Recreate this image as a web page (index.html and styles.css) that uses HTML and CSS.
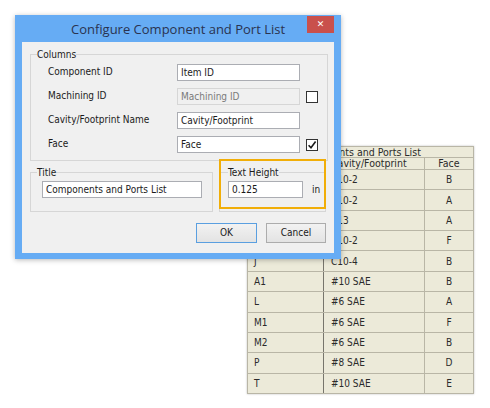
FILE: index.html
```html
<!DOCTYPE html>
<html>
<head>
<meta charset="utf-8">
<link rel="stylesheet" href="styles.css">
</head>
<body>
<div class="page">
  <table class="ports">
    <tr class="cap"><td colspan="3">Components and Ports List</td></tr>
    <tr class="head"><td class="c1"></td><td class="c2">Cavity/Footprint</td><td class="c3">Face</td></tr>
    <tr><td class="c1"></td><td class="c2">C10-2</td><td class="c3">B</td></tr>
    <tr><td class="c1"></td><td class="c2">C10-2</td><td class="c3">A</td></tr>
    <tr><td class="c1"></td><td class="c2">C13</td><td class="c3">A</td></tr>
    <tr><td class="c1"></td><td class="c2">C10-2</td><td class="c3">F</td></tr>
    <tr><td class="c1">J</td><td class="c2">C10-4</td><td class="c3">B</td></tr>
    <tr><td class="c1">A1</td><td class="c2">#10 SAE</td><td class="c3">B</td></tr>
    <tr><td class="c1">L</td><td class="c2">#6 SAE</td><td class="c3">A</td></tr>
    <tr><td class="c1">M1</td><td class="c2">#6 SAE</td><td class="c3">F</td></tr>
    <tr><td class="c1">M2</td><td class="c2">#6 SAE</td><td class="c3">B</td></tr>
    <tr><td class="c1">P</td><td class="c2">#8 SAE</td><td class="c3">D</td></tr>
    <tr><td class="c1">T</td><td class="c2">#10 SAE</td><td class="c3">E</td></tr>
  </table>

  <div class="dialog">
    <div class="titlebar">
      <span></span>
      <span class="title">Configure Component and Port List</span>
      <span class="close">&#x2715;</span>
    </div>
    <div class="content">
      <fieldset class="group columns">
        <legend>Columns</legend>
        <div class="grid">
          <span class="lbl">Component ID</span>
          <span class="input">Item ID</span>
          <span></span>
          <span class="lbl">Machining ID</span>
          <span class="input disabled">Machining ID</span>
          <span class="check"></span>
          <span class="lbl">Cavity/Footprint Name</span>
          <span class="input">Cavity/Footprint</span>
          <span></span>
          <span class="lbl">Face</span>
          <span class="input">Face</span>
          <span class="check checked"><svg viewBox="0 0 10 10" width="10" height="10"><path d="M1.6 5.2 L4 7.8 L8.6 1.6" fill="none" stroke="#1a1a1a" stroke-width="1.6"/></svg></span>
        </div>
      </fieldset>
      <div class="bottom">
        <fieldset class="group titlebox">
          <legend>Title</legend>
          <span class="input wide">Components and Ports List</span>
        </fieldset>
        <fieldset class="group heightbox">
          <legend>Text Height</legend>
          <div class="hrow">
            <span class="input short">0.125</span>
            <span class="unit">in</span>
          </div>
        </fieldset>
      </div>
      <div class="buttons">
        <span class="btn default">OK</span>
        <span class="btn">Cancel</span>
      </div>
      <div class="highlight"></div>
    </div>
  </div>
</div>
</body>
</html>
```

FILE: styles.css
```css
html, body {
  margin: 0;
  padding: 0;
  background: #ffffff;
}
.page {
  position: relative;
  width: 490px;
  height: 408px;
  overflow: hidden;
  padding: 146px 0 0 247px;
  box-sizing: border-box;
}

/* background table */
.ports {
  border-collapse: collapse;
  width: 227px;
  background: #ecead9;
  font-family: "DejaVu Sans Condensed", "DejaVu Sans", sans-serif;
  font-size: 10px;
  color: #2b2b2b;
  box-shadow: 0 0 2px rgba(0,0,0,0.25);
}
.ports td {
  padding: 0;
  border: 1px solid #b9b6a6;
  line-height: 11px;
  white-space: nowrap;
}
.ports tr { height: 20.36px; }
.ports tr.cap { height: 10px; }
.ports tr.head { height: 12px; }
.ports tr.cap td {
  text-align: center;
  font-size: 10.5px;
  line-height: 10px;
  padding-right: 6px;
}
.ports tr.head td { line-height: 11px; font-size: 10.5px; }
.ports .c1 { width: 69px; padding-left: 6px; border-right-color: #77756c; }
.ports .c2 { width: 93px; padding-left: 7px; }
.ports .c3 { text-align: center; }

/* dialog */
.dialog {
  position: absolute;
  left: 15px;
  top: 15px;
  width: 326px;
  height: 244px;
  background: #66acf4;
  box-shadow: 0 1px 5px rgba(0,0,0,0.28);
  display: flex;
  flex-direction: column;
  padding: 0 7px 6px 7px;
  box-sizing: border-box;
}
.titlebar {
  height: 27px;
  display: grid;
  grid-template-columns: 1fr auto 1fr;
  align-items: start;
  margin: 0 -7px;
}
.title {
  font-family: "Open Sans", "Noto Sans", sans-serif;
  font-size: 13px;
  color: #2a3350;
  line-height: 16px;
  margin-top: 6px;
  white-space: nowrap;
}
.close {
  justify-self: end;
  margin-right: 7px;
  margin-top: 1px;
  width: 27px;
  height: 17px;
  background: #c9504c;
  color: #ffffff;
  font-family: "DejaVu Sans", sans-serif;
  font-size: 9px;
  font-weight: bold;
  line-height: 17px;
  text-align: center;
}
.content {
  position: relative;
  flex: 1;
  background: #f0f0f0;
  padding: 6px 6px 0 8px;
  display: flex;
  flex-direction: column;
  font-family: "DejaVu Sans Condensed", "DejaVu Sans", sans-serif;
  font-size: 10px;
  color: #1b1b1b;
}
.group {
  margin: 0;
  border: 1px solid #d6d6d6;
  padding: 0;
  min-width: 0;
}
.group legend {
  padding: 0;
  line-height: 13px;
  margin-left: 6px;
}
.columns { padding: 0 0 7px 0; }
.grid {
  display: grid;
  grid-template-columns: 129px 123px 12px;
  column-gap: 0;
  row-gap: 7px;
  margin: 3px 0 0 17px;
}
.grid .check { margin-left: 6px; }
.lbl {
  height: 17px;
  line-height: 15px;
}
.input {
  box-sizing: border-box;
  height: 17px;
  border: 1px solid #abadb3;
  background: #ffffff;
  padding: 0 3px;
  line-height: 15px;
  white-space: nowrap;
  overflow: hidden;
  display: block;
}
.input.disabled {
  background: #f0f0f0;
  border-color: #d6d6d6;
  color: #7a7a7a;
}
.check {
  box-sizing: border-box;
  width: 12px;
  height: 12px;
  border: 1px solid #333333;
  background: #ffffff;
  align-self: center;
  display: flex;
  align-items: center;
  justify-content: center;
}
.bottom {
  display: flex;
  margin-top: 5px;
  margin-right: 2px;
}
.titlebox {
  width: 183px;
  box-sizing: border-box;
  padding: 2px 10px 13px 11px;
}
.titlebox legend { margin-left: -5px; }
.input.wide { width: 160px; }
.heightbox {
  width: 107px;
  box-sizing: border-box;
  margin-left: 6px;
  padding: 2px 0 13px 8px;
}
.heightbox legend { margin-left: 0; }
.hrow {
  display: flex;
  align-items: center;
}
.input.short { width: 75px; }
.unit { margin-left: 9px; }
.buttons {
  display: flex;
  justify-content: flex-end;
  gap: 9px;
  margin-top: 11px;
  margin-right: 2px;
}
.btn {
  box-sizing: border-box;
  height: 20px;
  width: 60px;
  border: 1px solid #acacac;
  background: linear-gradient(#f2f2f2, #e3e3e3);
  text-align: center;
  line-height: 18px;
}
.btn.default {
  width: 61px;
  border-color: #5a9fe0;
}
.highlight {
  position: absolute;
  left: 197px;
  top: 117px;
  width: 107px;
  height: 50px;
  box-sizing: border-box;
  border: 2px solid #f1ae08;
  pointer-events: none;
}
```
